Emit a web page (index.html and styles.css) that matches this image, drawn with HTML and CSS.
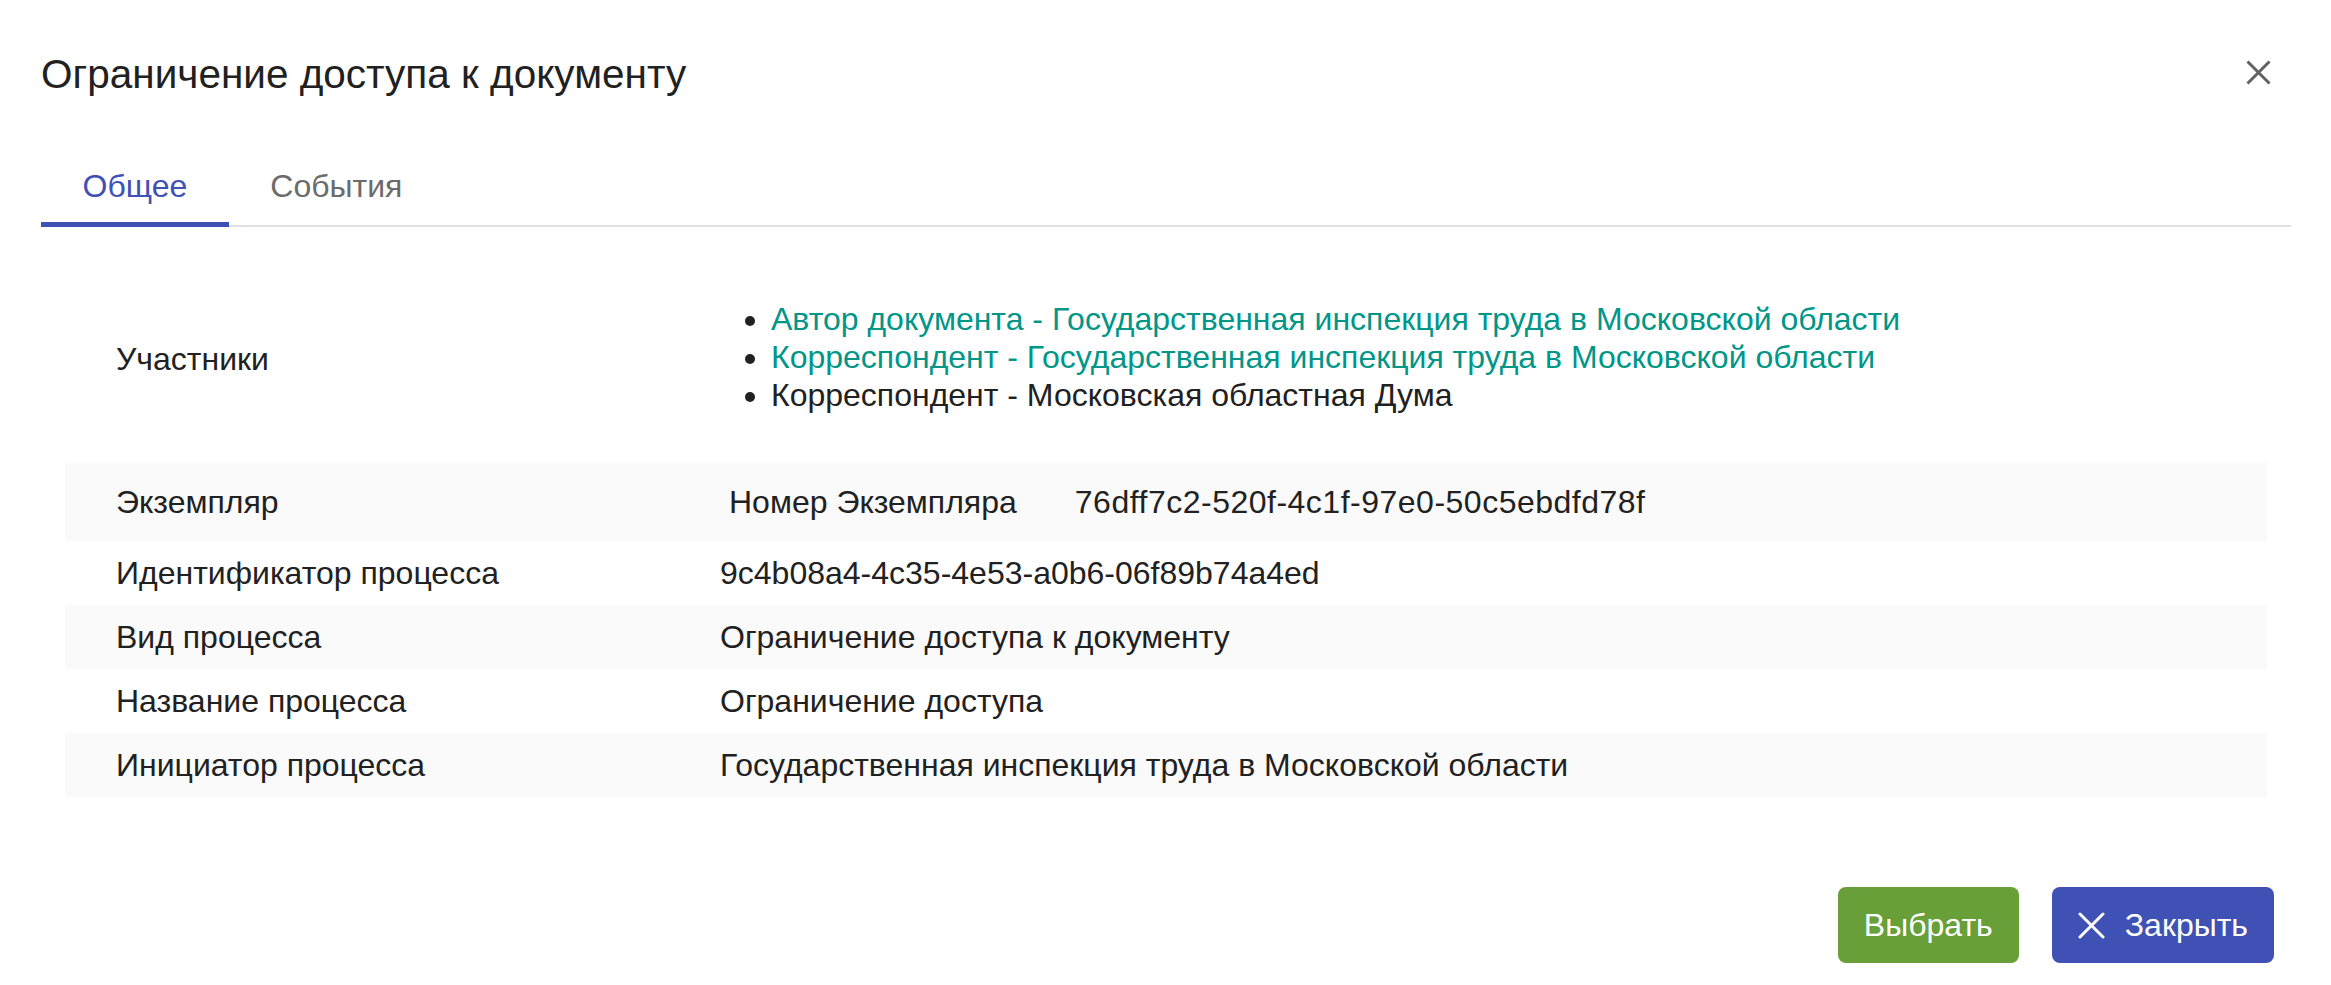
FILE: index.html
```html
<!DOCTYPE html>
<html lang="ru">
<head>
<meta charset="utf-8">
<title>Ограничение доступа к документу</title>
<link rel="stylesheet" href="styles.css">
</head>
<body>
<div class="dialog">
  <header class="dialog-header">
    <h1 class="dialog-title">Ограничение доступа к документу</h1>
    <button class="icon-close" aria-label="Закрыть">
      <svg width="25" height="25" viewBox="0 0 25 25"><path d="M1.5 1.5 L23.5 23.5 M23.5 1.5 L1.5 23.5" stroke="#616161" stroke-width="3" fill="none"/></svg>
    </button>
  </header>
  <nav class="tabs">
    <div class="tab tab-active">Общее</div>
    <div class="tab">События</div>
  </nav>
  <table class="info">
    <tr class="row-participants">
      <td class="label">Участники</td>
      <td class="value">
        <ul class="participants">
          <li class="link">Автор документа - Государственная инспекция труда в Московской области</li>
          <li class="link">Корреспондент - Государственная инспекция труда в Московской области</li>
          <li>Корреспондент - Московская областная Дума</li>
        </ul>
      </td>
    </tr>
    <tr class="striped">
      <td class="label">Экземпляр</td>
      <td class="value">
        <table class="nested">
          <tr><td class="nested-key">Номер Экземпляра</td><td class="nested-val">76dff7c2-520f-4c1f-97e0-50c5ebdfd78f</td></tr>
        </table>
      </td>
    </tr>
    <tr>
      <td class="label">Идентификатор процесса</td>
      <td class="value">9c4b08a4-4c35-4e53-a0b6-06f89b74a4ed</td>
    </tr>
    <tr class="striped">
      <td class="label">Вид процесса</td>
      <td class="value">Ограничение доступа к документу</td>
    </tr>
    <tr>
      <td class="label">Название процесса</td>
      <td class="value">Ограничение доступа</td>
    </tr>
    <tr class="striped">
      <td class="label">Инициатор процесса</td>
      <td class="value">Государственная инспекция труда в Московской области</td>
    </tr>
  </table>
  <footer class="actions">
    <button class="btn btn-green">Выбрать</button>
    <button class="btn btn-blue">
      <svg class="btn-icon" width="27" height="27" viewBox="0 0 27 27"><path d="M2 2 L25 25 M25 2 L2 25" stroke="#fff" stroke-width="3" stroke-linecap="round" fill="none"/></svg>
      <span>Закрыть</span>
    </button>
  </footer>
</div>
</body>
</html>
```

FILE: styles.css
```css
html, body {
  margin: 0;
  padding: 0;
  background: #ffffff;
}

body {
  font-family: "Liberation Sans", Arial, sans-serif;
  color: #212121;
  font-size: 32px;
}

.dialog {
  padding: 0 40px 0 41px;
}

.dialog-header {
  display: flex;
  align-items: flex-start;
  justify-content: space-between;
  padding-top: 51px;
}

.dialog-title {
  margin: 0;
  font-size: 40.5px;
  font-weight: 400;
  line-height: 46px;
  color: #212121;
}

.icon-close {
  border: 0;
  background: none;
  padding: 0;
  margin: 9px 20px 0 0;
  width: 25px;
  height: 25px;
  display: flex;
}

.tabs {
  display: flex;
  margin-top: 54px;
  border-bottom: 2px solid #e0e0e0;
}

.tab {
  padding: 17px 41.5px;
  line-height: 37px;
  font-size: 32px;
  color: #6b6b6b;
  border-bottom: 5px solid transparent;
  margin-bottom: -2px;
}

.tab-active {
  color: #3f51b5;
  border-bottom-color: #3f51b5;
}

.info {
  border-collapse: collapse;
  margin: 28px 24px 0 24px;
  width: calc(100% - 48px);
}

.info td {
  padding: 13px 0;
  line-height: 38px;
  vertical-align: middle;
}

.info td.label {
  width: 604px;
  padding-left: 51px;
}

.striped {
  background: #fafafa;
}

.participants {
  margin: 32px 0 36px 0;
  padding-left: 51px;
  list-style: disc;
}

.participants li {
  line-height: 38px;
}

.participants li::marker {
  color: #212121;
}

.participants .link {
  color: #009688;
}

.nested {
  border-collapse: collapse;
}

.info .nested td {
  padding: 7px 0;
  line-height: 38px;
}

.info .nested td.nested-key {
  padding-left: 9px;
  padding-right: 58px;
}

.info .nested td.nested-val {
  letter-spacing: 0.5px;
}

.actions {
  display: flex;
  justify-content: flex-end;
  gap: 33px;
  margin-top: 90px;
  padding-right: 17px;
}

.btn {
  height: 76px;
  border: 0;
  border-radius: 8px;
  padding: 0 26px;
  font-family: "Liberation Sans", Arial, sans-serif;
  font-size: 32px;
  color: #ffffff;
  display: flex;
  align-items: center;
  gap: 20px;
}

.btn-green {
  background: #689f38;
}

.btn-blue {
  background: #3f51b5;
}

.btn-icon {
  display: block;
}
```
